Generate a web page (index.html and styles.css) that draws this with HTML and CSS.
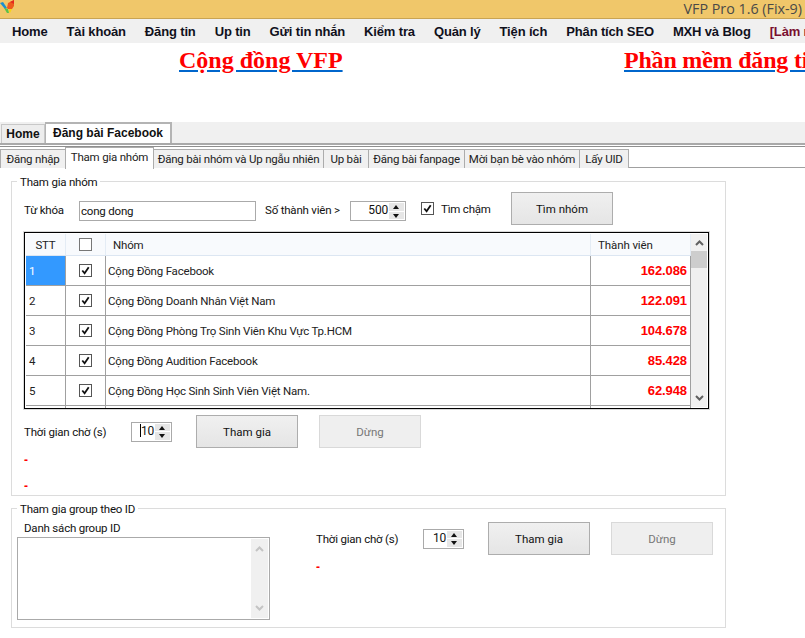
FILE: index.html
```html
<!DOCTYPE html>
<html lang="vi">
<head>
<meta charset="utf-8">
<title>VFP Pro 1.6 (Fix-9)</title>
<link rel="stylesheet" href="styles.css">
</head>
<body>
<header class="titlebar">
  <svg class="logo" width="15" height="14" viewBox="0 0 15 14"><path d="M0 3l3-1 4 6-2 1z" fill="#1a8fd0"/><path d="M4 8l4 1 1 4-2 0z" fill="#5cc04a"/><path d="M7 8l1-5 6-3 0 6-2 3-4 0z" fill="#ee5a1c"/><path d="M10 2l4-2 0 4z" fill="#e4281f"/><path d="M9 9l3 0-2 4-1-1z" fill="#f6d516"/></svg>
  <span class="app-name">VFP Pro 1.6 (Fix-9)</span>
</header>
<nav class="menu">
  <span class="menu-item">Home</span><span class="menu-item">Tài khoản</span><span class="menu-item">Đăng tin</span><span class="menu-item">Up tin</span><span class="menu-item">Gửi tin nhắn</span><span class="menu-item">Kiểm tra</span><span class="menu-item">Quản lý</span><span class="menu-item">Tiện ích</span><span class="menu-item">Phân tích SEO</span><span class="menu-item">MXH và Blog</span><span class="menu-item menu-hot">[Làm nhiệm vụ]</span>
</nav>
<section class="banner">
  <a class="banner-link first">Cộng đồng VFP</a>
  <a class="banner-link second">Phần mềm đăng tin</a>
</section>
<div class="main-tabs">
  <span class="main-tab">Home</span>
  <span class="main-tab active">Đăng bài Facebook</span>
</div>
<div class="sub-tabs">
  <span class="sub-tab">Đăng nhập</span>
  <span class="sub-tab active">Tham gia nhóm</span>
  <span class="sub-tab">Đăng bài nhóm và Up ngẫu nhiên</span>
  <span class="sub-tab">Up bài</span>
  <span class="sub-tab">Đăng bài fanpage</span>
  <span class="sub-tab">Mời bạn bè vào nhóm</span>
  <span class="sub-tab">Lấy UID</span>
</div>
<main class="content">
  <section class="group group-join">
    <h2 class="legend">Tham gia nhóm</h2>
    <div class="search-row">
      <label class="lbl lbl-key">Từ khóa</label>
      <div class="textbox">cong dong</div>
      <label class="lbl lbl-count">Số thành viên &gt;</label>
      <div class="spinner spinner-wide">
        <span class="spin-value">500</span>
        <span class="spin-btns"><i class="up"></i><i class="down"></i></span>
      </div>
      <span class="check checked check-slow"><svg viewBox="0 0 12 12"><path d="M2.5 6l2.5 3 4.5-6.5" /></svg></span>
      <label class="lbl lbl-slow">Tìm chậm</label>
      <button class="btn btn-find">Tìm nhóm</button>
    </div>
    <div class="grid">
      <div class="grid-body">
        <div class="row head">
          <span class="cell c-stt center">STT</span>
          <span class="cell c-chk center"><span class="check plain"></span></span>
          <span class="cell c-name head-name">Nhóm</span>
          <span class="cell c-num head-num">Thành viên</span>
        </div>
        <div class="row">
          <span class="cell c-stt selected">1</span>
          <span class="cell c-chk center"><span class="check checked"><svg viewBox="0 0 12 12"><path d="M2.5 6l2.5 3 4.5-6.5" /></svg></span></span>
          <span class="cell c-name">Cộng Đồng Facebook</span>
          <span class="cell c-num">162.086</span>
        </div>
        <div class="row">
          <span class="cell c-stt">2</span>
          <span class="cell c-chk center"><span class="check checked"><svg viewBox="0 0 12 12"><path d="M2.5 6l2.5 3 4.5-6.5" /></svg></span></span>
          <span class="cell c-name">Cộng Đồng Doanh Nhân Việt Nam</span>
          <span class="cell c-num">122.091</span>
        </div>
        <div class="row">
          <span class="cell c-stt">3</span>
          <span class="cell c-chk center"><span class="check checked"><svg viewBox="0 0 12 12"><path d="M2.5 6l2.5 3 4.5-6.5" /></svg></span></span>
          <span class="cell c-name">Cộng Đồng Phòng Trọ Sinh Viên Khu Vực Tp.HCM</span>
          <span class="cell c-num">104.678</span>
        </div>
        <div class="row">
          <span class="cell c-stt">4</span>
          <span class="cell c-chk center"><span class="check checked"><svg viewBox="0 0 12 12"><path d="M2.5 6l2.5 3 4.5-6.5" /></svg></span></span>
          <span class="cell c-name">Cộng Đồng Audition Facebook</span>
          <span class="cell c-num">85.428</span>
        </div>
        <div class="row">
          <span class="cell c-stt">5</span>
          <span class="cell c-chk center"><span class="check checked"><svg viewBox="0 0 12 12"><path d="M2.5 6l2.5 3 4.5-6.5" /></svg></span></span>
          <span class="cell c-name">Cộng Đồng Học Sinh Sinh Viên Việt Nam.</span>
          <span class="cell c-num">62.948</span>
        </div>
        <div class="row">
          <span class="cell c-stt"></span>
          <span class="cell c-chk"></span>
          <span class="cell c-name"></span>
          <span class="cell c-num"></span>
        </div>
      </div>
      <div class="vscroll">
        <svg class="arrow" viewBox="0 0 9 6"><path d="M1 5l3.5-3.5L8 5"/></svg>
        <span class="thumb"></span>
        <svg class="arrow arrow-bottom" viewBox="0 0 9 6"><path d="M1 1l3.5 3.5L8 1"/></svg>
      </div>
    </div>
    <div class="action-row">
      <label class="lbl lbl-wait">Thời gian chờ (s)</label>
      <div class="spinner spinner-small">
        <span class="spin-value"><span class="caret"></span>10</span>
        <span class="spin-btns"><i class="up"></i><i class="down"></i></span>
      </div>
      <button class="btn btn-join">Tham gia</button>
      <button class="btn btn-stop" disabled>Dừng</button>
    </div>
    <p class="status status-one">-</p>
    <p class="status status-two">-</p>
  </section>
  <section class="group group-id">
    <h2 class="legend">Tham gia group theo ID</h2>
    <div class="id-left">
      <label class="lbl lbl-list">Danh sách group ID</label>
      <div class="memo">
        <div class="memo-scroll">
          <svg class="arrow" viewBox="0 0 9 6"><path d="M1 5l3.5-3.5L8 5"/></svg>
          <svg class="arrow" viewBox="0 0 9 6"><path d="M1 1l3.5 3.5L8 1"/></svg>
        </div>
      </div>
    </div>
    <div class="id-right">
      <div class="action-row id-actions">
        <label class="lbl lbl-wait">Thời gian chờ (s)</label>
        <div class="spinner spinner-small">
          <span class="spin-value">10</span>
          <span class="spin-btns"><i class="up"></i><i class="down"></i></span>
        </div>
        <button class="btn btn-join">Tham gia</button>
        <button class="btn btn-stop" disabled>Dừng</button>
      </div>
      <p class="status status-id">-</p>
    </div>
  </section>
</main>
</body>
</html>
```

FILE: styles.css
```css
* { box-sizing: border-box; }
html, body { margin: 0; padding: 0; }
body {
  width: 805px;
  height: 638px;
  overflow: hidden;
  background: #fff;
  color: #111;
  font-family: Roboto, "Liberation Sans", sans-serif;
  font-size: 11.5px;
  letter-spacing: -0.2px;
}

.titlebar {
  height: 19px;
  background: #f0c76a;
  border-bottom: 1px solid #c9a453;
  display: flex;
  justify-content: space-between;
  align-items: flex-start;
}
.logo { display: block; }
.app-name {
  font-family: "Open Sans", sans-serif;
  font-size: 14.3px;
  line-height: 17px;
  letter-spacing: 0;
  color: #4a4a48;
  margin-right: 3px;
}

.menu {
  height: 24px;
  background: #f0f0f0;
  display: flex;
  align-items: center;
  padding-left: 12px;
  gap: 19px;
  white-space: nowrap;
  overflow: hidden;
  font: bold 13px "Liberation Sans", sans-serif;
  letter-spacing: -0.15px;
  color: #10101c;
}
.menu-hot { color: #7a1030; }

.banner {
  height: 79px;
  position: relative;
  overflow: hidden;
}
.banner-link {
  position: absolute;
  top: 3px;
  font: bold 24px/28px "Liberation Serif", serif;
  letter-spacing: 0;
  color: #f00;
  text-decoration: underline;
  text-decoration-color: #0066cc;
  white-space: nowrap;
}
.banner-link.first { left: 179px; }
.banner-link.second { left: 624px; letter-spacing: -0.2px; }

.main-tabs {
  height: 21px;
  background: #f0f0f0;
  display: flex;
  align-items: flex-end;
  padding-left: 1px;
  font: bold 12px "Liberation Sans", sans-serif;
  letter-spacing: 0;
}
.main-tab {
  height: 19px;
  width: 44px;
  line-height: 19px;
  text-align: center;
  background: #ededed;
  border: 1px solid #c8c8c8;
  border-bottom: 0;
  color: #111;
}
.main-tab.active {
  height: 21px;
  width: 127px;
  line-height: 18px;
  background: #fff;
  border: 2px solid #b4b4b4;
  border-bottom: 0;
  border-left-width: 1px;
}

.sub-tabs {
  height: 25px;
  border-top: 2px solid #a9a9a9;
  display: grid;
  grid-template-columns: 65px 88px 170px 45px 96px 115px 49px 1fr;
  align-items: end;
  padding-top: 2px;
  border-bottom: 1px solid #a0a0a0;
  background: linear-gradient(#fff 0 1px, #8f8f8f 1px 2px, #fff 2px);
}
.sub-tab {
  height: 19px;
  line-height: 19px;
  text-align: center;
  background: #f0f0f0;
  border: 1px solid #acacac;
  border-bottom: 0;
  margin-right: -1px;
  white-space: nowrap;
  color: #222;
}
.sub-tab.active {
  height: 22px;
  line-height: 18px;
  background: #fff;
  position: relative;
  margin-bottom: -1px;
}

.content {
  padding: 13px 0 0 11px;
  width: 726px;
}
.group {
  position: relative;
  border: 1px solid #dcdcdc;
  width: 715px;
}
.legend {
  position: absolute;
  top: -7px;
  left: 5px;
  margin: 0;
  padding: 0 3px;
  background: #fff;
  font: inherit;
  line-height: 14px;
  color: #111;
}
.group-join { height: 315px; padding: 10px 0 0 12px; }
.group-id { height: 120px; margin-top: 12px; display: flex; }

.lbl { white-space: nowrap; color: #111; line-height: 14px; }

.search-row { display: flex; align-items: flex-start; height: 33px; }
.search-row .lbl { margin-top: 11px; }
.lbl-key { width: 55px; }
.textbox {
  width: 177px;
  height: 20px;
  margin-top: 9px;
  border: 1px solid #aaa;
  line-height: 19px;
  padding-left: 1px;
}
.lbl-count { margin-left: 9px; width: 85px; }
.spinner {
  height: 20px;
  border: 1px solid #aaa;
  background: #fff;
  display: flex;
  align-items: stretch;
  padding: 1px;
}
.search-row .spinner { margin-top: 9px; }
.spinner-wide { width: 56px; }
.spinner-small { width: 41px; }
.spin-value { flex: 1; text-align: right; line-height: 15px; padding-right: 1px; color: #111; font-size: 12px; }
.caret { display: inline-block; width: 1px; height: 13px; background: #000; vertical-align: -2px; }
.spin-btns { width: 15px; display: flex; flex-direction: column; gap: 1px; }
.spin-btns i { flex: 1; background: #e6e6e6; position: relative; display: block; }
.spin-btns i::after {
  content: "";
  position: absolute;
  left: 4px;
  border-left: 3px solid transparent;
  border-right: 3px solid transparent;
}
.spin-btns .up::after { top: 2px; border-bottom: 4px solid #111; }
.spin-btns .down::after { top: 2px; border-top: 4px solid #111; }

.check {
  display: inline-block;
  width: 13px;
  height: 13px;
  border: 1px solid #555;
  background: #fff;
  flex: none;
}
.check svg { display: block; width: 11px; height: 11px; }
.check path { fill: none; stroke: #111; stroke-width: 2; }
.check-slow { margin-left: 15px; margin-top: 10px; }
.check.plain { border-color: #777; }
.search-row .lbl-slow { margin-left: 7px; width: 70px; margin-top: 10px; }

.btn {
  width: 102px;
  height: 33px;
  border: 1px solid #adadad;
  background: linear-gradient(#f0f0f0, #e5e5e5);
  font: inherit;
  color: #111;
  padding: 0;
}
.btn[disabled] { background: #efefef; border-color: #d9d9d9; color: #777; }

.grid {
  width: 685px;
  height: 177px;
  margin-top: 7px;
  border: 1px solid #000;
  padding: 1px;
  display: flex;
  overflow: hidden;
  box-shadow: 0 0 0 1px rgba(0, 0, 0, 0.15);
}
.grid-body { width: 665px; flex: none; }
.row {
  display: grid;
  grid-template-columns: 40px 40px 485px 100px;
  height: 30px;
  border-bottom: 1px solid #a0a0a0;
}
.row.head {
  height: 22px;
  background: #f8fafd;
  border-bottom: 1px solid #dce6f2;
}
.cell {
  display: flex;
  align-items: center;
  padding-left: 3px;
  border-right: 1px solid #a0a0a0;
  color: #222;
  overflow: hidden;
  white-space: nowrap;
}
.head .cell { border-right: 1px solid #e4ecf5; }
.center { justify-content: center; padding-left: 0; }
.selected { background: #3399ff; color: #fff; }
.c-name { padding-left: 2px; }
.head .head-name { padding-left: 7px; }
.c-num {
  justify-content: flex-end;
  padding: 0 3px 0 0;
  font: bold 13px "Liberation Sans", sans-serif;
  letter-spacing: -0.1px;
  color: #f00;
}
.head .head-num {
  justify-content: flex-start;
  padding-left: 7px;
  font: inherit;
  color: #222;
}

.vscroll {
  flex: 1;
  background: #f0f0f0;
  display: flex;
  flex-direction: column;
  align-items: center;
  padding-top: 6px;
}
.arrow { width: 9px; height: 6px; display: block; flex: none; }
.arrow path { fill: none; stroke: #606060; stroke-width: 2; }
.thumb { width: 16px; height: 17px; background: #cdcdcd; margin-top: 5px; }
.arrow-bottom { margin-top: auto; margin-bottom: 6px; }

.action-row { display: flex; align-items: center; height: 33px; margin-top: 6px; }
.lbl-wait { width: 107px; }
.action-row .btn-join { margin-left: 24px; }
.action-row .btn-stop { margin-left: 21px; }

.status { margin: 0; color: #f00; font: bold 12px/14px "Liberation Sans", sans-serif; letter-spacing: 0; }
.status-one { margin-top: 5px; }
.status-two { margin-top: 12px; }

.id-left { width: 304px; padding: 12px 0 0 5px; flex: none; }
.lbl-list { display: block; margin-left: 7px; }
.memo {
  width: 253px;
  height: 83px;
  margin-top: 2px;
  border: 1px solid #aaa;
  display: flex;
  justify-content: flex-end;
  padding: 1px;
}
.memo-scroll {
  width: 17px;
  background: #f0f0f0;
  display: flex;
  flex-direction: column;
  justify-content: space-between;
  align-items: center;
  padding: 7px 0;
}
.memo-scroll .arrow path { stroke: #c4c4c4; }
.id-right { padding-top: 13px; }
.id-actions { margin-top: 0; }
.status-id { margin-top: 5px; }
```
